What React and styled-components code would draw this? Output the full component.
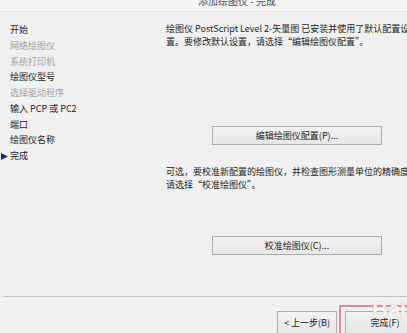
import React from 'react'
import styled, { createGlobalStyle } from 'styled-components'

const Global = createGlobalStyle`
  html, body {
    margin: 0;
    padding: 0;
    background: #f0f0f0;
    overflow: hidden;
  }
  * { box-sizing: border-box; }
`

const steps = [
  { label: '开始' },
  { label: '网络绘图仪', muted: true },
  { label: '系统打印机', muted: true },
  { label: '绘图仪型号' },
  { label: '选择驱动程序', muted: true },
  { label: '输入 PCP 或 PC2' },
  { label: '端口' },
  { label: '绘图仪名称' },
  { label: '完成', current: true },
]

function App() {
  return <Dialog>
    <Global />
    <TitleBar>
      <Title>添加绘图仪 - 完成</Title>
    </TitleBar>
    <Main>
      <Sidebar>
        {steps.map((s) => (
          <Step key={s.label} $muted={s.muted} $current={s.current}>
            {s.current && (
              <Marker width="9" height="9" viewBox="0 0 9 9">
                <path d="M1 1 L8 4.5 L1 8 Z" fill="#1d2580" />
              </Marker>
            )}
            {s.label}
          </Step>
        ))}
      </Sidebar>
      <Content>
        <Para>
          <Line>绘图仪 PostScript Level 2-矢量图 已安装并使用了默认配置设</Line>
          <Line>置。要修改默认设置，请选择“编辑绘图仪配置”。</Line>
        </Para>
        <WideButton $top={78}>编辑绘图仪配置(P)...</WideButton>
        <Para $top={20}>
          <Line>可选，要校准新配置的绘图仪，并检查图形测量单位的精确度，</Line>
          <Line>请选择“校准绘图仪”。</Line>
        </Para>
        <WideButton $top={45}>校准绘图仪(C)...</WideButton>
      </Content>
    </Main>
    <Footer>
      <NavButton $top={6} $width={60}>&lt; 上一步(B)</NavButton>
      <Highlight>
        <NavButton $width={80}>完成(F)</NavButton>
      </Highlight>
      <Watermark>Bai</Watermark>
    </Footer>
  </Dialog>
}

const Dialog = styled.div`
  position: relative;
  width: 407px;
  height: 333px;
  display: flex;
  flex-direction: column;
  background: #f0f0f0;
  font-family: "Noto Sans CJK SC", "Noto Sans", sans-serif;
  color: #1e1e1e;
  overflow: hidden;
`

const TitleBar = styled.div`
  height: 12px;
  flex-shrink: 0;
  display: flex;
  align-items: flex-end;
  padding: 0 0 5px 198px;
  background: #f5f5f5;
  border-bottom: 1px solid #e3e3e3;
  overflow: hidden;
`

const Title = styled.div`
  font-size: 10px;
  line-height: 10px;
  color: #4a4f58;
  white-space: nowrap;
`

const Main = styled.div`
  flex: 1;
  display: flex;
  min-height: 0;
`

const Sidebar = styled.div`
  width: 166px;
  flex-shrink: 0;
  padding: 10px 0 0 10px;
  display: flex;
  flex-direction: column;
`

const Step = styled.div`
  font-size: 9px;
  line-height: 15.75px;
  height: 15.75px;
  white-space: nowrap;
  color: ${(p) => (p.$muted ? '#a3a3a3' : '#1e1e1e')};
  margin-left: ${(p) => (p.$current ? '-10px' : '0')};
  display: flex;
  align-items: center;
`

const Marker = styled.svg`
  display: block;
  flex-shrink: 0;
  margin: 2px 1px 0 0;
`

const Content = styled.div`
  flex: 1;
  padding-top: 10px;
  display: flex;
  flex-direction: column;
  min-width: 0;
`

const Para = styled.div`
  margin-top: ${(p) => p.$top || 0}px;
  font-size: 9px;
  line-height: 13px;
`

const Line = styled.div`
  white-space: nowrap;
`

const buttonLook = `
  font-family: "Noto Sans CJK SC", "Noto Sans", sans-serif;
  font-size: 9px;
  line-height: 12px;
  color: #222;
  background: linear-gradient(#f3f3f3, #e6e6e6);
  border: 1px solid #adadad;
  padding: 0;
  display: flex;
  align-items: center;
  justify-content: center;
  white-space: nowrap;
`

const WideButton = styled.button`
  ${buttonLook}
  margin-top: ${(p) => p.$top}px;
  margin-left: 46px;
  width: 170px;
  height: 19px;
`

const Footer = styled.div`
  position: relative;
  height: 37px;
  flex-shrink: 0;
  margin-left: 4px;
  border-top: 1px solid #c4c4c4;
  display: flex;
  align-items: flex-start;
  padding: 8px 0 0 273px;
`

const NavButton = styled.button`
  ${buttonLook}
  margin-top: ${(p) => p.$top || 0}px;
  width: ${(p) => p.$width}px;
  height: 24px;
  flex-shrink: 0;
`

const Highlight = styled.div`
  margin-left: 2px;
  padding: 4px 0 0 4px;
  border: 2px solid #e4879a;
  border-right: none;
  border-bottom: none;
  display: flex;
  align-items: flex-start;
  flex-shrink: 0;
`

const Watermark = styled.div`
  position: absolute;
  left: 368px;
  top: 2px;
  font-family: "Liberation Sans", Arial, sans-serif;
  font-weight: bold;
  font-size: 22px;
  line-height: 22px;
  color: rgba(255, 255, 255, 0.92);
  text-shadow: 0 0 1px rgba(110, 110, 110, 0.6);
  white-space: nowrap;
`

export default App
